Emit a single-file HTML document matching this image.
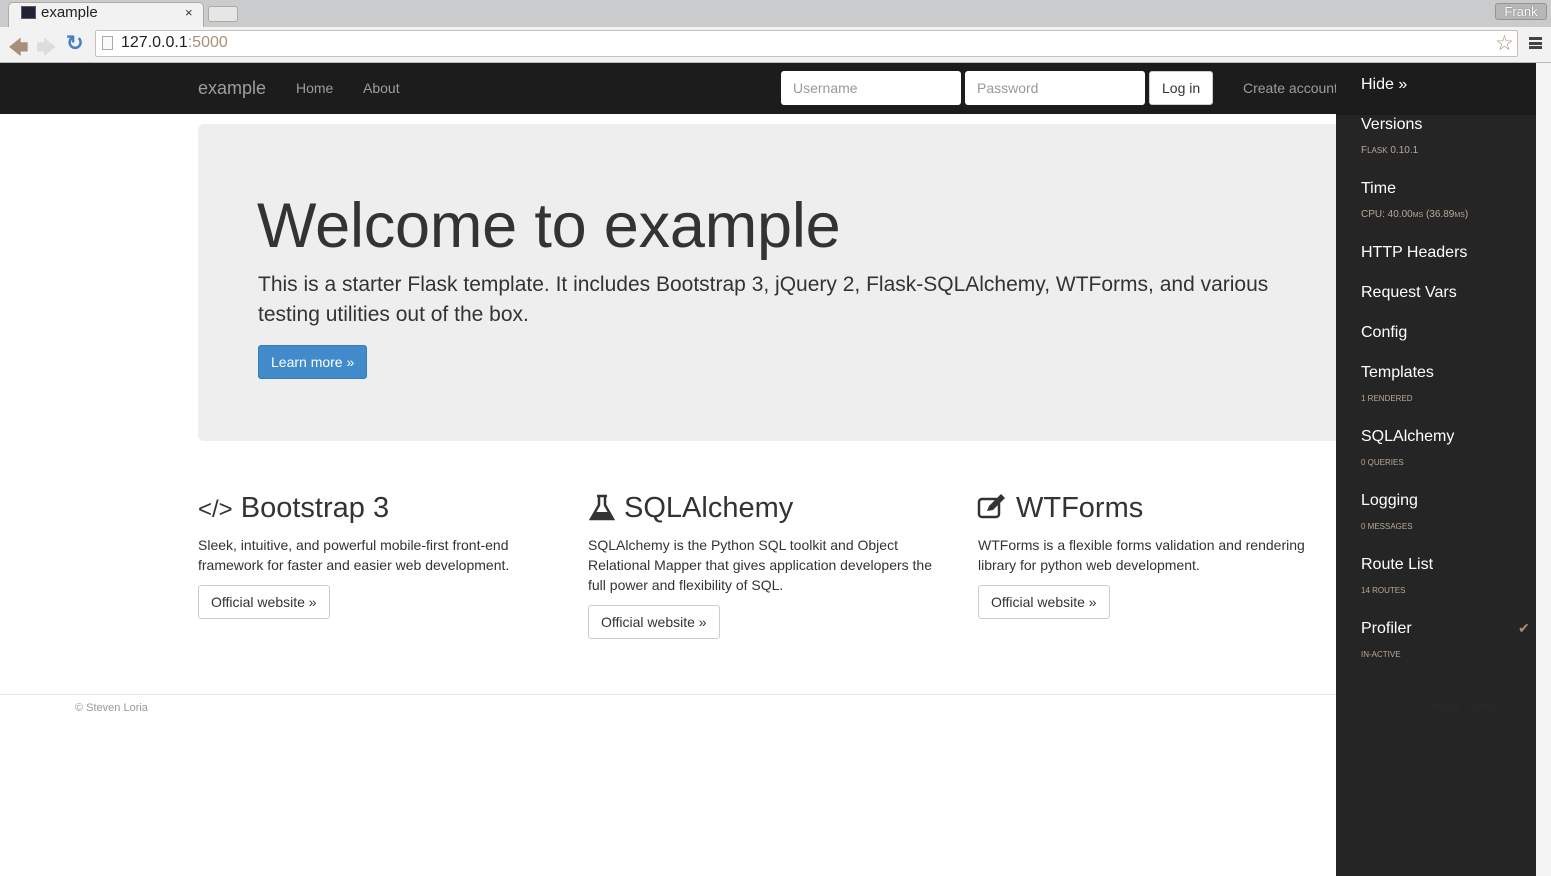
<!DOCTYPE html>
<html><head><style>
*{margin:0;padding:0;box-sizing:border-box}
body{width:1551px;height:876px;overflow:hidden;font-family:"Liberation Sans",sans-serif;background:#fff;position:relative;color:#333}
.abs{position:absolute}
</style></head><body>
<div class="abs" style="left:0;top:0;width:1551px;height:27px;background:#c9cbcc"></div>
<div class="abs" style="left:8px;top:2px;width:196px;height:25px;background:#f2f2f2;border-radius:5px 5px 0 0;border:1px solid #b8a898;border-bottom:none"></div>
<div class="abs" style="left:21px;top:6px;width:15px;height:13px;background:#223;border:1px solid #557"></div>
<div class="abs" style="left:41px;top:4px;font-size:15px;color:#222">example</div>
<div class="abs" style="left:185px;top:5px;font-size:13px;color:#333">×</div>
<div class="abs" style="left:208px;top:6px;width:30px;height:16px;background:#e6e6e6;border:1px solid #b8a898;border-radius:3px"></div>
<div class="abs" style="left:1495px;top:3px;width:52px;height:17px;border:1px solid #a09080;border-radius:3px;font-size:13px;color:#fff;text-align:center;text-shadow:0 0 1px #555;line-height:16px;background:#b5b7b8">Frank</div>
<div class="abs" style="left:0;top:27px;width:1551px;height:36px;background:#f2f2f2;border-bottom:1px solid #bbb"></div>
<div class="abs" style="left:8px;top:33px;font-size:20px;color:#a89078">🡄</div>
<div class="abs" style="left:36px;top:33px;font-size:20px;color:#ddd">🡆</div>
<div class="abs" style="left:66px;top:31px;font-size:21px;color:#4a7fc0;font-weight:bold">↻</div>
<div class="abs" style="left:95px;top:30px;width:1423px;height:27px;background:#fff;border:1px solid #c8c0b8;border-radius:2px"></div>
<div class="abs" style="left:102px;top:36px;width:11px;height:14px;border:1px solid #aaa;background:#fafafa"></div>
<div class="abs" style="left:121px;top:34px;font-size:16px;color:#222">127.0.0.1<span style="color:#a89078">:5000</span></div>
<div class="abs" style="left:1495px;top:31px;font-size:21px;color:#a89078">☆</div>
<div class="abs" style="left:1529px;top:37px;width:13px;height:12px;border-top:3px solid #444;border-bottom:3px solid #444"></div>
<div class="abs" style="left:1529px;top:42px;width:13px;height:3px;background:#444"></div>
<div class="abs" style="left:0;top:63px;width:1551px;height:51px;background:#1c1c1c"></div>
<div class="abs" style="left:198px;top:78px;font-size:18px;color:#9d9d9d">example</div>
<div class="abs" style="left:296px;top:80px;font-size:14px;color:#9d9d9d">Home</div>
<div class="abs" style="left:363px;top:80px;font-size:14px;color:#9d9d9d">About</div>
<div class="abs" style="left:781px;top:71px;width:180px;height:34px;background:#fff;border-radius:3px;font-size:14px;color:#999;padding:9px 12px">Username</div>
<div class="abs" style="left:965px;top:71px;width:180px;height:34px;background:#fff;border-radius:3px;font-size:14px;color:#999;padding:9px 12px">Password</div>
<div class="abs" style="left:1149px;top:71px;width:64px;height:34px;background:#fff;border:1px solid #ccc;border-radius:3px;font-size:14px;color:#333;padding:8px 12px;white-space:nowrap">Log in</div>
<div class="abs" style="left:1243px;top:80px;font-size:14px;color:#9d9d9d;white-space:nowrap">Create account</div>
<div class="abs" style="left:198px;top:124px;width:1160px;height:317px;background:#eee;border-radius:6px"></div>
<div class="abs" style="left:257px;top:190px;font-size:63px;color:#333;white-space:nowrap;letter-spacing:-0.2px">Welcome to example</div>
<div class="abs" style="left:258px;top:270px;width:1040px;font-size:21px;line-height:30px;color:#333">This is a starter Flask template. It includes Bootstrap 3, jQuery 2, Flask-SQLAlchemy, WTForms, and various testing utilities out of the box.</div>
<div class="abs" style="left:258px;top:345px;width:109px;height:34px;background:#428bca;border:1px solid #357ebd;border-radius:3px;color:#fff;font-size:14px;padding:8px 12px;white-space:nowrap">Learn more »</div>
<div class="abs" style="left:198px;top:492px;font-size:29px;color:#333;white-space:nowrap"><span style="font-size:24px">&lt;/&gt;</span> Bootstrap 3</div>
<div class="abs" style="left:198px;top:535px;width:360px;font-size:14px;line-height:20px">Sleek, intuitive, and powerful mobile-first front-end framework for faster and easier web development.</div>
<div class="abs" style="left:198px;top:585px;width:132px;height:34px;border:1px solid #ccc;border-radius:3px;font-size:14px;padding:8px 12px;white-space:nowrap">Official website »</div>
<svg class="abs" style="left:589px;top:494px" width="26" height="28" viewBox="0 0 26 28"><path d="M8 2h10M10 2v9L2 25h22L16 11V2" fill="none" stroke="#333" stroke-width="2.5"/><path d="M6 18h14l4 7H2z" fill="#333"/></svg>
<div class="abs" style="left:624px;top:492px;font-size:29px;color:#333">SQLAlchemy</div>
<div class="abs" style="left:588px;top:535px;width:360px;font-size:14px;line-height:20px">SQLAlchemy is the Python SQL toolkit and Object Relational Mapper that gives application developers the full power and flexibility of SQL.</div>
<div class="abs" style="left:588px;top:605px;width:132px;height:34px;border:1px solid #ccc;border-radius:3px;font-size:14px;padding:8px 12px;white-space:nowrap">Official website »</div>
<svg class="abs" style="left:977px;top:494px" width="32" height="26" viewBox="0 0 32 26"><rect x="2" y="5" width="20" height="18" rx="3" fill="none" stroke="#333" stroke-width="2.5"/><path d="M10 17l2-5L24 0l4 4-12 12z" fill="#333"/></svg>
<div class="abs" style="left:1016px;top:492px;font-size:29px;color:#333">WTForms</div>
<div class="abs" style="left:978px;top:535px;width:340px;font-size:14px;line-height:20px">WTForms is a flexible forms validation and rendering library for python web development.</div>
<div class="abs" style="left:978px;top:585px;width:132px;height:34px;border:1px solid #ccc;border-radius:3px;font-size:14px;padding:8px 12px;white-space:nowrap">Official website »</div>
<div class="abs" style="left:0;top:694px;width:1336px;height:1px;background:#e5e5e5"></div>
<div class="abs" style="left:75px;top:702px;font-size:11px;color:#999">© Steven Loria</div>
<div class="abs" style="left:1336px;top:63px;width:200px;height:813px;background:#252525"></div>
<div class="abs" style="left:1336px;top:63px;width:200px;height:52px;background:#1c1c1c"></div>
<div class="abs" style="left:1361px;top:76px;font-size:16px;color:#fff">Hide »</div>
<div class="abs" style="left:1361px;top:115px;font-size:16px;color:#fff;line-height:20px">
<div style="height:64px">Versions<div style="font-size:10px;color:#b8a898;margin-top:6px">F<span style="font-size:8px">LASK</span> 0.10.1</div></div>
<div style="height:64px">Time<div style="font-size:10px;color:#b8a898;margin-top:6px">CPU: 40.00<span style="font-size:7px">MS</span> (36.89<span style="font-size:7px">MS</span>)</div></div>
<div style="height:40px">HTTP Headers</div>
<div style="height:40px">Request Vars</div>
<div style="height:40px">Config</div>
<div style="height:64px">Templates<div style="font-size:8px;color:#b8a898;margin-top:6px">1 RENDERED</div></div>
<div style="height:64px">SQLAlchemy<div style="font-size:8px;color:#b8a898;margin-top:6px">0 QUERIES</div></div>
<div style="height:64px">Logging<div style="font-size:8px;color:#b8a898;margin-top:6px">0 MESSAGES</div></div>
<div style="height:64px">Route List<div style="font-size:8px;color:#b8a898;margin-top:6px">14 ROUTES</div></div>
<div style="height:64px">Profiler<div style="font-size:8px;color:#b8a898;margin-top:6px">IN-ACTIVE</div></div>
</div>
<div class="abs" style="left:1518px;top:620px;font-size:14px;color:#a89078">✔</div>
<div class="abs" style="left:1430px;top:701px;font-size:11px;color:#2a2a2a">About &nbsp;Contact</div>
<div class="abs" style="left:1536px;top:63px;width:15px;height:813px;background:#f4f4f4"></div>
</body></html>
